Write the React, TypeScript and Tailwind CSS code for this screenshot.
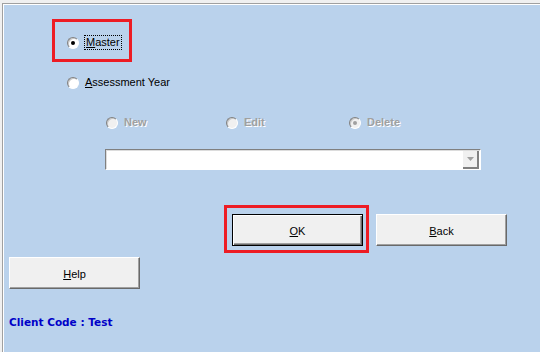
import React from 'react';

interface RadioProps {
  checked?: boolean;
  disabled?: boolean;
}

const Radio: React.FC<RadioProps> = ({ checked, disabled }) => (
  <span
    className={`relative flex items-center justify-center w-[12px] h-[12px] shrink-0 rounded-full border border-t-[#808080] border-l-[#808080] border-r-white border-b-white shadow-[inset_1px_1px_0_#c8c8c8] ${
      disabled ? 'bg-[#f0f0f0]' : 'bg-white'
    }`}
  >
    {checked && (
      <span
        className={`w-[4px] h-[4px] rounded-full ${disabled ? 'bg-[#a0a0a0]' : 'bg-black'}`}
      />
    )}
  </span>
);

interface OptionProps {
  label: string;
  checked?: boolean;
  className?: string;
}

const DisabledOption: React.FC<OptionProps> = ({ label, checked, className }) => (
  <div className={`flex items-center ${className ?? ''}`}>
    <Radio disabled checked={checked} />
    <span className="ml-[6px] font-bold text-[#a0a0a0] [text-shadow:1px_1px_0_#ffffff]">
      {label}
    </span>
  </div>
);

const btn =
  'flex items-center justify-center w-[131px] h-[32px] pt-[2px] bg-[#f0f0f0] border border-t-white border-l-white border-r-[#696969] border-b-[#696969] shadow-[inset_-1px_-1px_0_#a0a0a0]';

export default function App() {
  return (
    <div className="w-[540px] h-[352px] bg-[#f0f0f0] pt-[3px] pl-[2px] overflow-hidden font-['Liberation_Sans',Arial,sans-serif] text-[11px] text-black">
      <div className="h-full border-t border-l border-[#a0a0a0]">
        <div className="h-full border-t border-l border-white bg-[#bad2ec] flex flex-col items-start">
          {/* Master */}
          <div className="ml-[48px] mt-[14px] w-[80px] h-[43px] border-[3px] border-[#ed1c24] pl-[12px] pt-[13px]">
            <div className="flex items-center h-[15px]">
              <Radio checked />
              <span className="ml-[5px] h-[15px] leading-[13px] border border-dotted border-black px-px">
                <u>M</u>aster
              </span>
            </div>
          </div>

          {/* Assessment Year */}
          <div className="ml-[63px] mt-[14px] h-[13px] flex items-center">
            <Radio />
            <span className="ml-[6px]">
              <u>A</u>ssessment Year
            </span>
          </div>

          {/* New / Edit / Delete */}
          <div className="ml-[102px] mt-[27px] h-[13px] flex items-center">
            <DisabledOption label="New" className="w-[120px]" />
            <DisabledOption label="Edit" className="w-[123px]" />
            <DisabledOption label="Delete" checked />
          </div>

          {/* Combo */}
          <div className="ml-[101px] mt-[20px] w-[376px] h-[21px] bg-white border border-t-[#808080] border-l-[#808080] border-r-white border-b-white shadow-[inset_1px_1px_0_#dcdcdc] flex justify-end items-center pr-px">
            <div className="w-[16px] h-[18px] bg-[#f0f0f0] border-r-2 border-b-2 border-[#808080] flex items-center justify-center">
              <svg width="7" height="4" viewBox="0 0 7 4">
                <path d="M0 0h7L3.5 4z" fill="#a0a0a0" />
              </svg>
            </div>
          </div>

          {/* OK / Back */}
          <div className="mt-[35px] flex items-start">
            <div className="ml-[220px] w-[145px] h-[48px] border-[3px] border-[#ed1c24] pt-[6px] pl-[5px]">
              <button className="flex items-center justify-center w-[131px] h-[32px] pt-[2px] bg-[#f0f0f0] border border-black shadow-[inset_1px_1px_0_#ffffff,inset_-1px_-1px_0_#696969,inset_-2px_-2px_0_#a0a0a0]">
                <span>
                  <u>O</u>K
                </span>
              </button>
            </div>
            <button className={`${btn} ml-[7px] mt-[9px]`}>
              <span>
                <u>B</u>ack
              </span>
            </button>
          </div>

          {/* Help */}
          <button className={`${btn} ml-[5px] mt-[4px] w-[130px]`}>
            <span>
              <u>H</u>elp
            </span>
          </button>

          <div className="ml-[5px] mt-[27px] leading-[13px] font-bold text-[#0000c8] font-['DejaVu_Sans',sans-serif] text-[10.5px]">
            Client Code : Test
          </div>
        </div>
      </div>
    </div>
  );
}
